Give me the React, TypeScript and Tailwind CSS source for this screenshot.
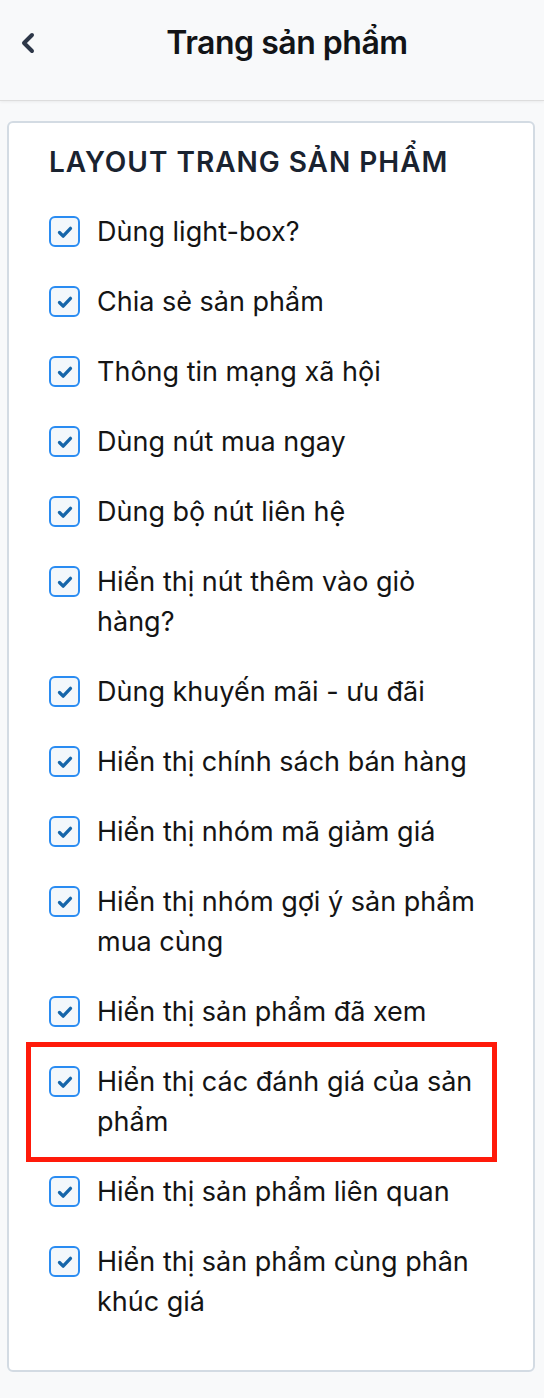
import { ChevronLeft } from 'lucide-react';

const items: string[][] = [
    ['Dùng light-box?'],
    ['Chia sẻ sản phẩm'],
    ['Thông tin mạng xã hội'],
    ['Dùng nút mua ngay'],
    ['Dùng bộ nút liên hệ'],
    ['Hiển thị nút thêm vào giỏ', 'hàng?'],
    ['Dùng khuyến mãi - ưu đãi'],
    ['Hiển thị chính sách bán hàng'],
    ['Hiển thị nhóm mã giảm giá'],
    ['Hiển thị nhóm gợi ý sản phẩm', 'mua cùng'],
    ['Hiển thị sản phẩm đã xem'],
    ['Hiển thị các đánh giá của sản', 'phẩm'],
    ['Hiển thị sản phẩm liên quan'],
    ['Hiển thị sản phẩm cùng phân', 'khúc giá'],
];

// index of the row that is outlined in red
const highlighted = 11;

function CheckBox() {
    return (
        <span className="mt-[4px] flex h-[31px] w-[31px] shrink-0 items-center justify-center rounded-[6px] border-2 border-[#2a8cf2] bg-[#f3f7fb]">
            <svg viewBox="0 0 24 24" className="h-[22px] w-[22px]" fill="none">
                <path d="M6 12.5l4 4 8-8.5" stroke="#1565a9" strokeWidth="3.6" strokeLinecap="round" strokeLinejoin="round" />
            </svg>
        </span>
    );
}

export default function App() {
    return (
        <div className="min-h-screen bg-[#f8f9fa] font-['Inter',sans-serif]">
            {/* Header */}
            <div className="flex h-[101px] items-start border-b border-[#dddddd] bg-[#f8f9fa] px-4 pt-[20px] shadow-[0_1px_3px_rgba(0,0,0,0.06)]">
                <button className="flex h-[46px] w-[30px] items-center text-[#2d3748]">
                    <ChevronLeft className="-ml-[4px] h-[32px] w-[32px]" strokeWidth={3} />
                </button>
                <h1 className="flex-1 text-center text-[32px] font-semibold leading-[46px] tracking-[-0.015em] text-[#121417]">
                    Trang sản phẩm
                </h1>
            </div>

            <div className="pb-[26px] pt-[20px]">
                <div className="ml-[7px] mr-[9px] rounded-[6px] border-2 border-[#d3dbe3] bg-white pb-[48px] pl-[40px] pr-[40px] pt-[22px]">
                    <h2 className="text-[28px] font-semibold leading-[34px] tracking-[0.035em] text-[#1a2330]">
                        LAYOUT TRANG SẢN PHẨM
                    </h2>
                    <div className="mt-[33px] flex flex-col gap-[30px]">
                        {items.map((lines, i) => (
                            <label key={i} className="relative flex gap-[17px]">
                                {i === highlighted && (
                                    <span className="pointer-events-none absolute -bottom-[20px] -left-[23px] -right-[4px] -top-[20px] border-[5px] border-[#ff1a0a]" />
                                )}
                                <CheckBox />
                                <span className="text-[27px] leading-[40px] text-[#141414]">
                                    {lines.map((l, j) => (
                                        <span key={j} className="block">{l}</span>
                                    ))}
                                </span>
                            </label>
                        ))}
                    </div>
                </div>
            </div>
        </div>
    );
}
